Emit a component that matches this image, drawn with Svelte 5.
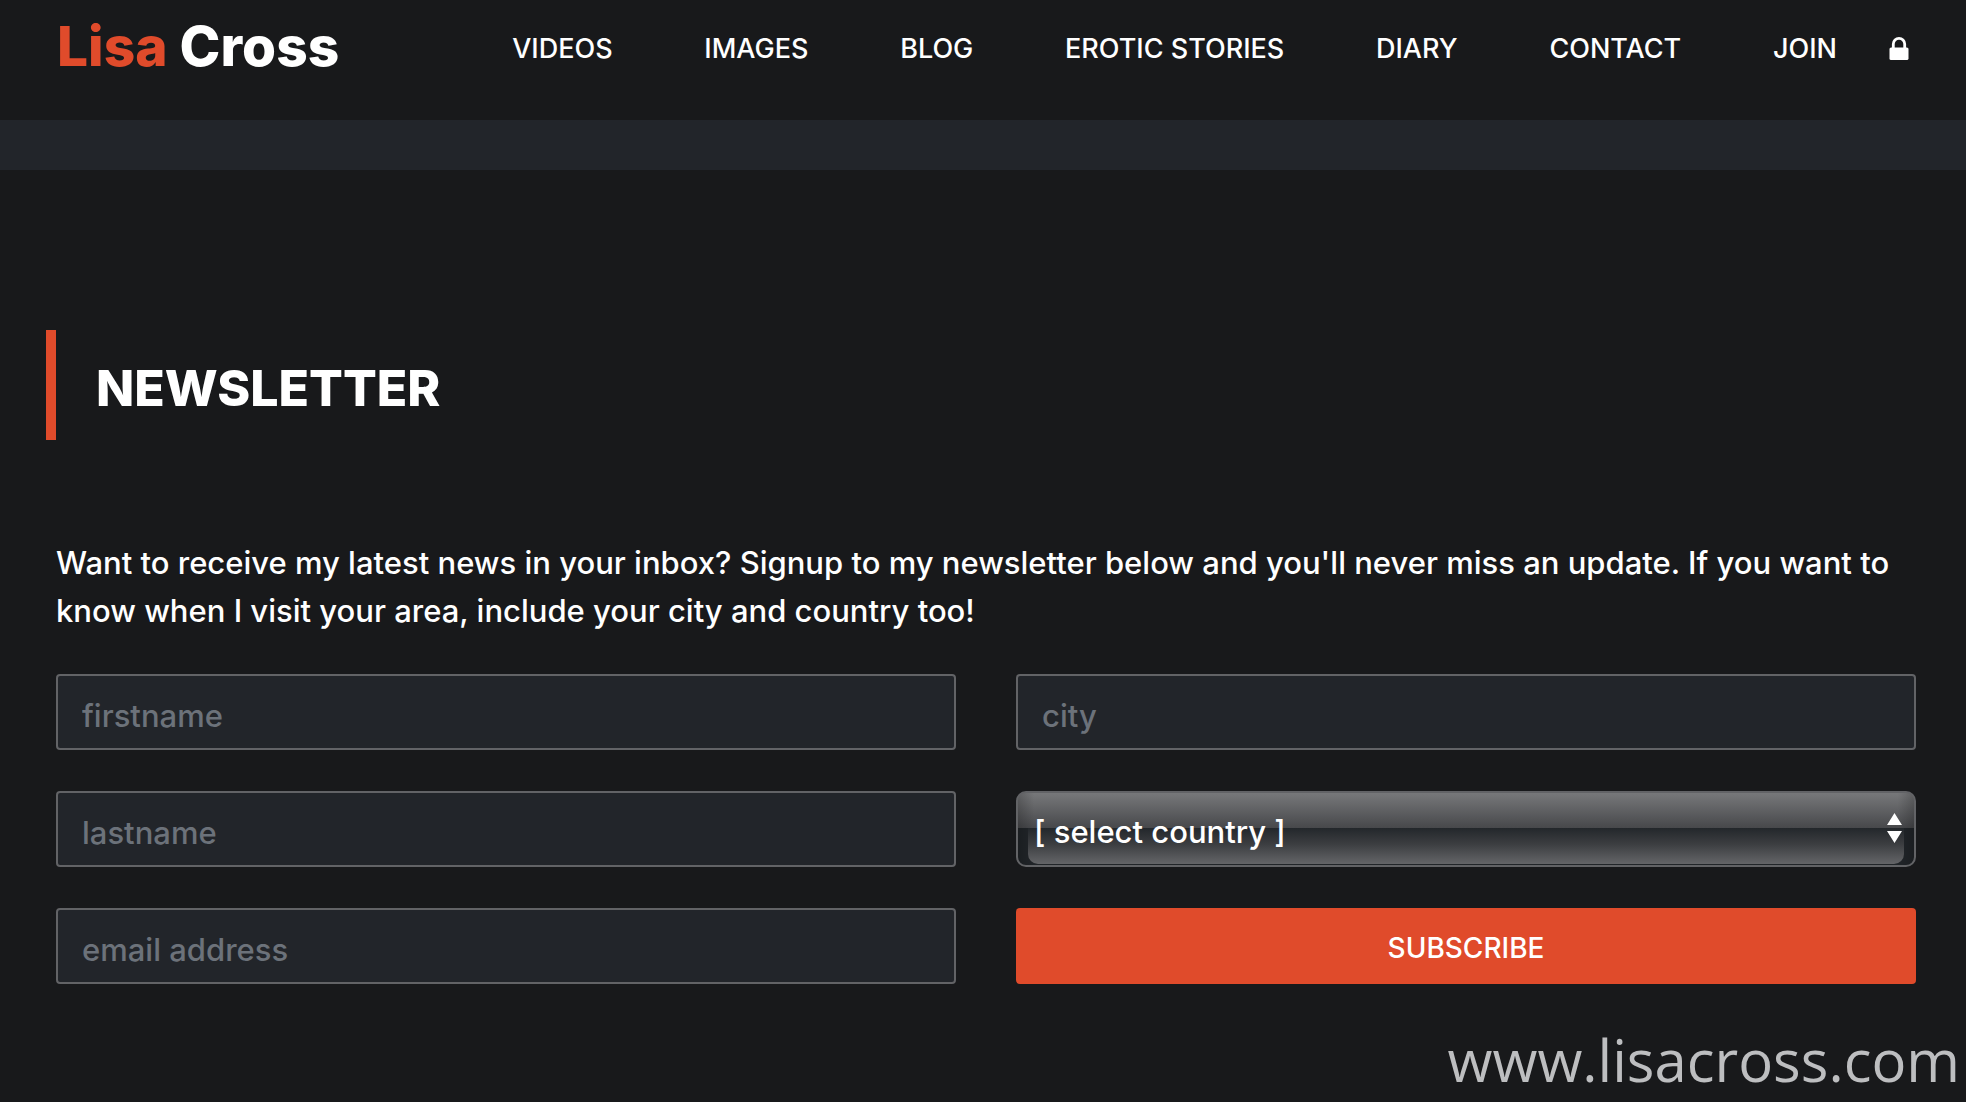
<script lang="ts">
	const links = ['VIDEOS', 'IMAGES', 'BLOG', 'EROTIC STORIES', 'DIARY', 'CONTACT'];
	const countries = ['United Kingdom', 'United States', 'Germany', 'France', 'Netherlands'];

	let firstname = $state('');
	let lastname = $state('');
	let email = $state('');
	let city = $state('');
	let country = $state('');

	function subscribe(e: SubmitEvent) {
		e.preventDefault();
	}
</script>

<header class="top">
	<a class="logo" href="#home"><span>Lisa</span> Cross</a>
	<nav class="nav" aria-label="Main">
		{#each links as link}
			<a href="#{link.toLowerCase().replace(' ', '-')}">{link}</a>
		{/each}
		<div class="member">
			<a href="#join">JOIN</a>
			<a class="lock" href="#login" aria-label="Log in">
				<svg viewBox="0 0 20 24" aria-hidden="true">
					<path d="M4.3 12V7.1a5.7 5.7 0 0 1 11.4 0V12" fill="none" stroke="#fff" stroke-width="2.8" />
					<rect x="0.5" y="10.5" width="19" height="12.5" rx="1.6" fill="#fff" />
				</svg>
			</a>
		</div>
	</nav>
</header>
<div class="band"></div>

<main>
	<h1>NEWSLETTER</h1>
	<p>
		Want to receive my latest news in your inbox? Signup to my newsletter below and you'll never
		miss an update. If you want to know when I visit your area, include your city and country too!
	</p>

	<form onsubmit={subscribe}>
		<input class="field" type="text" placeholder="firstname" aria-label="firstname" bind:value={firstname} />
		<input class="field" type="text" placeholder="city" aria-label="city" bind:value={city} />
		<input class="field" type="text" placeholder="lastname" aria-label="lastname" bind:value={lastname} />
		<div class="country">
			<select aria-label="country" bind:value={country}>
				<option value="">[ select country ]</option>
				{#each countries as name}
					<option value={name}>{name}</option>
				{/each}
			</select>
			<svg class="arrows" viewBox="0 0 15 30" aria-hidden="true">
				<path d="M7.5 0 L15 12 L0 12 Z M0 18 L15 18 L7.5 30 Z" fill="#fff" />
			</svg>
		</div>
		<input class="field" type="email" placeholder="email address" aria-label="email address" bind:value={email} />
		<button type="submit">SUBSCRIBE</button>
	</form>
</main>

<footer>www.lisacross.com</footer>

<style>
	:global(body) {
		background: #18191b;
		color: #fff;
		font-family: Inter, 'Liberation Sans', sans-serif;
	}

	a {
		color: inherit;
		text-decoration: none;
	}

	/* HEADER */
	.top {
		box-sizing: border-box;
		height: 120px;
		padding: 12px 57px 0 57px;
		display: flex;
		align-items: flex-start;
	}
	.logo {
		font-size: 55px;
		line-height: 68px;
		font-weight: 800;
		white-space: nowrap;
	}
	.logo span {
		color: #e04b2b;
	}
	.nav {
		flex: 1;
		margin-left: 173px;
		display: flex;
		justify-content: space-between;
		font-size: 27px;
		line-height: 74px;
		font-weight: 500;
		white-space: nowrap;
	}
	.member {
		display: flex;
		align-items: center;
		gap: 52px;
	}
	.lock {
		display: flex;
	}
	.lock svg {
		width: 20px;
		height: 24px;
	}
	.band {
		height: 50px;
		background: #22252a;
	}

	/* CONTENT */
	main {
		padding: 160px 50px 0 56px;
	}
	h1 {
		margin: 0 0 99px -10px;
		padding: 6px 0 0 40px;
		border-left: 10px solid #e04b2b;
		font-size: 50px;
		line-height: 104px;
		font-weight: 800;
	}
	p {
		margin: 0;
		font-size: 31px;
		line-height: 48px;
		font-weight: 500;
	}

	/* FORM */
	form {
		margin-top: 39px;
		display: grid;
		grid-template-columns: 1fr 1fr;
		gap: 41px 60px;
	}
	.field,
	.country,
	button {
		box-sizing: border-box;
		width: 100%;
		height: 76px;
		border: 2px solid #626366;
		border-radius: 4px;
	}
	.field {
		padding: 6px 24px 0;
		background: #22252a;
		color: #fff;
		font: 500 31px Inter, sans-serif;
	}
	.field::placeholder {
		color: #6c727a;
		opacity: 1;
	}
	.country {
		position: relative;
		overflow: hidden;
		border-radius: 10px;
		background:
			linear-gradient(90deg, #0003, transparent 16px, transparent calc(100% - 16px), #0003),
			linear-gradient(#77787a, #47484b 35px, #212529 35px);
	}
	.country::before {
		content: '';
		position: absolute;
		inset: 35px 10px 1px;
		border-radius: 0 0 10px 10px;
		background: linear-gradient(#23272b, #3c3e41 45%, #646568);
	}
	select {
		position: relative;
		appearance: none;
		width: 100%;
		height: 100%;
		padding: 4px 40px 0 16px;
		border: 0;
		background: transparent;
		color: #fff;
		font: 500 31px Inter, sans-serif;
	}
	option {
		background: #22252a;
	}
	.arrows {
		position: absolute;
		top: 20px;
		right: 12px;
		width: 15px;
		height: 30px;
		pointer-events: none;
	}
	button {
		padding: 4px 0 0;
		border: 0;
		background: #e04b2b;
		color: #fff;
		font: 500 28px Inter, sans-serif;
		cursor: pointer;
	}

	footer {
		margin-top: 36px;
		padding-right: 6px;
		font-family: 'Open Sans', 'Noto Sans', sans-serif;
		font-size: 58px;
		line-height: 80px;
		text-align: right;
		color: #bdbec0;
	}
</style>
